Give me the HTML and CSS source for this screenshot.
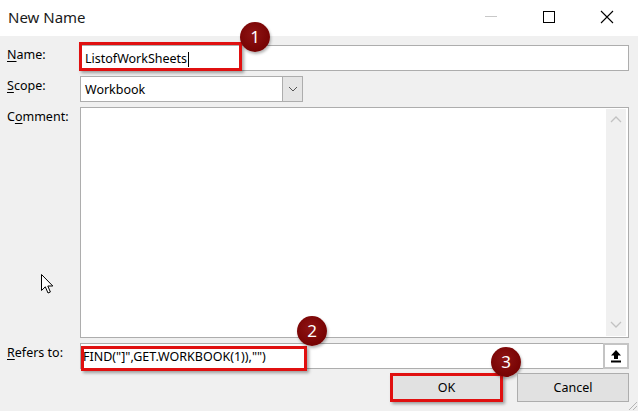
FILE: index.html
```html
<!DOCTYPE html>
<html>
<head>
<meta charset="utf-8">
<link rel="stylesheet" href="styles.css">
</head>
<body>
<div class="dialog">
  <div class="titlebar">
    <span class="title">New Name</span>
    <div class="controls">
      <svg class="ctl" width="46" height="36" viewBox="0 0 46 36"><line x1="17" y1="16.5" x2="29" y2="16.5" stroke="#c8c8c8" stroke-width="1"/></svg>
      <svg class="ctl" width="46" height="36" viewBox="0 0 46 36"><rect x="17.5" y="11.5" width="11" height="11" fill="none" stroke="#000" stroke-width="1"/></svg>
      <svg class="ctl" width="46" height="36" viewBox="0 0 46 36"><path d="M17 11 L29 23 M29 11 L17 23" stroke="#000" stroke-width="1.1"/></svg>
    </div>
  </div>
  <div class="body">
    <div class="label"><u>N</u>ame:</div>
    <div class="field text name-field">
      <span class="value">ListofWorkSheets</span><span class="caret"></span>
      <div class="mark mark-name"></div>
      <div class="badge badge-1">1</div>
    </div>

    <div class="label"><u>S</u>cope:</div>
    <div class="scope-row">
      <div class="select">
        <span class="value">Workbook</span>
        <div class="drop">
          <svg width="10" height="6" viewBox="0 0 10 6"><path d="M1 1 L5 5 L9 1" fill="none" stroke="#555" stroke-width="1"/></svg>
        </div>
      </div>
    </div>

    <div class="label">C<u>o</u>mment:</div>
    <div class="field comment">
      <div class="scroll">
        <svg width="12" height="8" viewBox="0 0 12 8"><path d="M1 7 L6 2 L11 7" fill="none" stroke="#c2c2c2" stroke-width="1.3"/></svg>
        <svg width="12" height="8" viewBox="0 0 12 8"><path d="M1 1 L6 6 L11 1" fill="none" stroke="#c2c2c2" stroke-width="1.3"/></svg>
      </div>
    </div>

    <div class="label"><u>R</u>efers to:</div>
    <div class="field text refers">
      <span class="value formula">FIND("]",GET.WORKBOOK(1)),"")</span>
      <div class="collapse">
        <svg width="14" height="14" viewBox="0 0 14 14"><path d="M7 1 L12 6.5 L9 6.5 L9 10 L5 10 L5 6.5 L2 6.5 Z" fill="#000"/><rect x="2" y="11.5" width="10" height="2" fill="#000"/></svg>
      </div>
      <div class="mark mark-refers"></div>
      <div class="badge badge-2">2</div>
    </div>

    <div class="buttons">
      <div class="btn ok">OK
        <div class="badge badge-3">3</div>
      </div>
      <div class="btn">Cancel</div>
    </div>
  </div>
  <svg class="grip" width="12" height="12" viewBox="0 0 12 12"><path d="M11 3 L3 11 M11 7 L7 11" stroke="#b5b5b5" stroke-width="1"/></svg>
  <svg class="cursor" width="14" height="21" viewBox="0 0 14 21"><path d="M0.5 0.5 L0.5 16.5 L4.3 12.8 L7 19 L9.4 18 L6.8 12 L11.8 12 Z" fill="#fff" stroke="#000" stroke-width="1" stroke-linejoin="miter"/></svg>
</div>
</body>
</html>
```

FILE: styles.css
```css
html, body {
  margin: 0;
  padding: 0;
  background: #f0f0f0;
}
body {
  font-family: "Noto Sans", "Open Sans", sans-serif;
  font-size: 12.5px;
  color: #000;
}
.dialog {
  position: relative;
  width: 638px;
  height: 411px;
  background: #f0f0f0;
  overflow: hidden;
}
.titlebar {
  height: 36px;
  background: #fff;
  display: flex;
  align-items: center;
  justify-content: space-between;
}
.title {
  padding-left: 8px;
  font-size: 15px;
  color: #1a1a1a;
  margin-top: -2px;
}
.controls {
  display: flex;
  align-items: flex-start;
  height: 36px;
  padding-right: 8px;
}
.ctl {
  display: block;
  margin-left: 12px;
}
.ctl:first-child { margin-left: 0; }
.body {
  display: grid;
  grid-template-columns: 80px 549px;
  grid-template-rows: 26px 26px 231px 26px 29px;
  row-gap: 5px;
  padding-top: 9px;
}
.label {
  padding-left: 7px;
  padding-top: 2px;
  line-height: 16px;
  color: #000;
}
.label u {
  text-decoration-thickness: 1px;
  text-underline-offset: 2px;
}
.field {
  position: relative;
  background: #fff;
  border: 1px solid #adadad;
  box-sizing: border-box;
}
.text {
  display: flex;
  align-items: center;
  padding-left: 4px;
}
.value {
  line-height: 16px;
  padding-top: 2px;
}
.caret {
  display: inline-block;
  width: 1px;
  height: 15px;
  background: #000;
  margin-left: 1px;
  margin-top: 2px;
}
.scope-row {
  display: flex;
}
.select {
  width: 223px;
  display: flex;
  align-items: center;
  justify-content: space-between;
  background: #fff;
  border: 1px solid #adadad;
  box-sizing: border-box;
  padding-left: 4px;
}
.drop {
  width: 19px;
  height: 24px;
  background: #e5e5e5;
  border-left: 1px solid #adadad;
  display: flex;
  align-items: center;
  justify-content: center;
}
.comment {
  display: flex;
  justify-content: flex-end;
}
.scroll {
  width: 20px;
  margin: 1px 2px 1px 0;
  background: #f0f0f0;
  display: flex;
  flex-direction: column;
  justify-content: space-between;
  align-items: center;
  padding: 6px 0 7px;
}
.scroll svg { display: block; }
.refers {
  justify-content: space-between;
  padding-right: 0;
}
.formula {
  padding-left: 0;
  margin-left: -2px;
}
.collapse {
  width: 26px;
  height: 26px;
  margin: -1px -1px -1px 0;
  box-sizing: border-box;
  border: 2px solid #c4c4c4;
  background: #fff;
  display: flex;
  align-items: center;
  justify-content: center;
}
.buttons {
  grid-column: 2;
  display: flex;
  justify-content: flex-end;
  gap: 14px;
  margin-top: -1px;
}
.btn {
  position: relative;
  width: 112px;
  height: 29px;
  box-sizing: border-box;
  background: #e1e1e1;
  border: 1px solid #adadad;
  display: flex;
  align-items: center;
  justify-content: center;
  line-height: 16px;
}
.ok {
  border: 3px solid #e01010;
  box-shadow: 2px 2px 3px rgba(0,0,0,0.35);
  width: 113px;
}
.mark {
  position: absolute;
  border: 3px solid #e01010;
  box-sizing: border-box;
  box-shadow: 2px 2px 3px rgba(0,0,0,0.35);
  pointer-events: none;
}
.mark-name {
  left: -2px;
  top: -4px;
  width: 163px;
  height: 29px;
}
.mark-refers {
  left: 0;
  top: 2px;
  width: 226px;
  height: 25px;
}
.badge {
  position: absolute;
  width: 30px;
  height: 30px;
  border-radius: 50%;
  background: radial-gradient(circle at 45% 40%, #8e1414 0%, #7a0505 60%, #6a0000 100%);
  color: #fff;
  font-size: 17px;
  line-height: 30px;
  text-align: center;
  box-shadow: 1px 2px 3px rgba(0,0,0,0.3);
}
.badge-1 { left: 159px; top: -24px; }
.badge-2 { left: 216px; top: -28px; }
.badge-3 { left: 98px; top: -29px; }
.grip {
  position: absolute;
  right: 0;
  bottom: 0;
}
.cursor {
  position: absolute;
  left: 41px;
  top: 274px;
}
```
